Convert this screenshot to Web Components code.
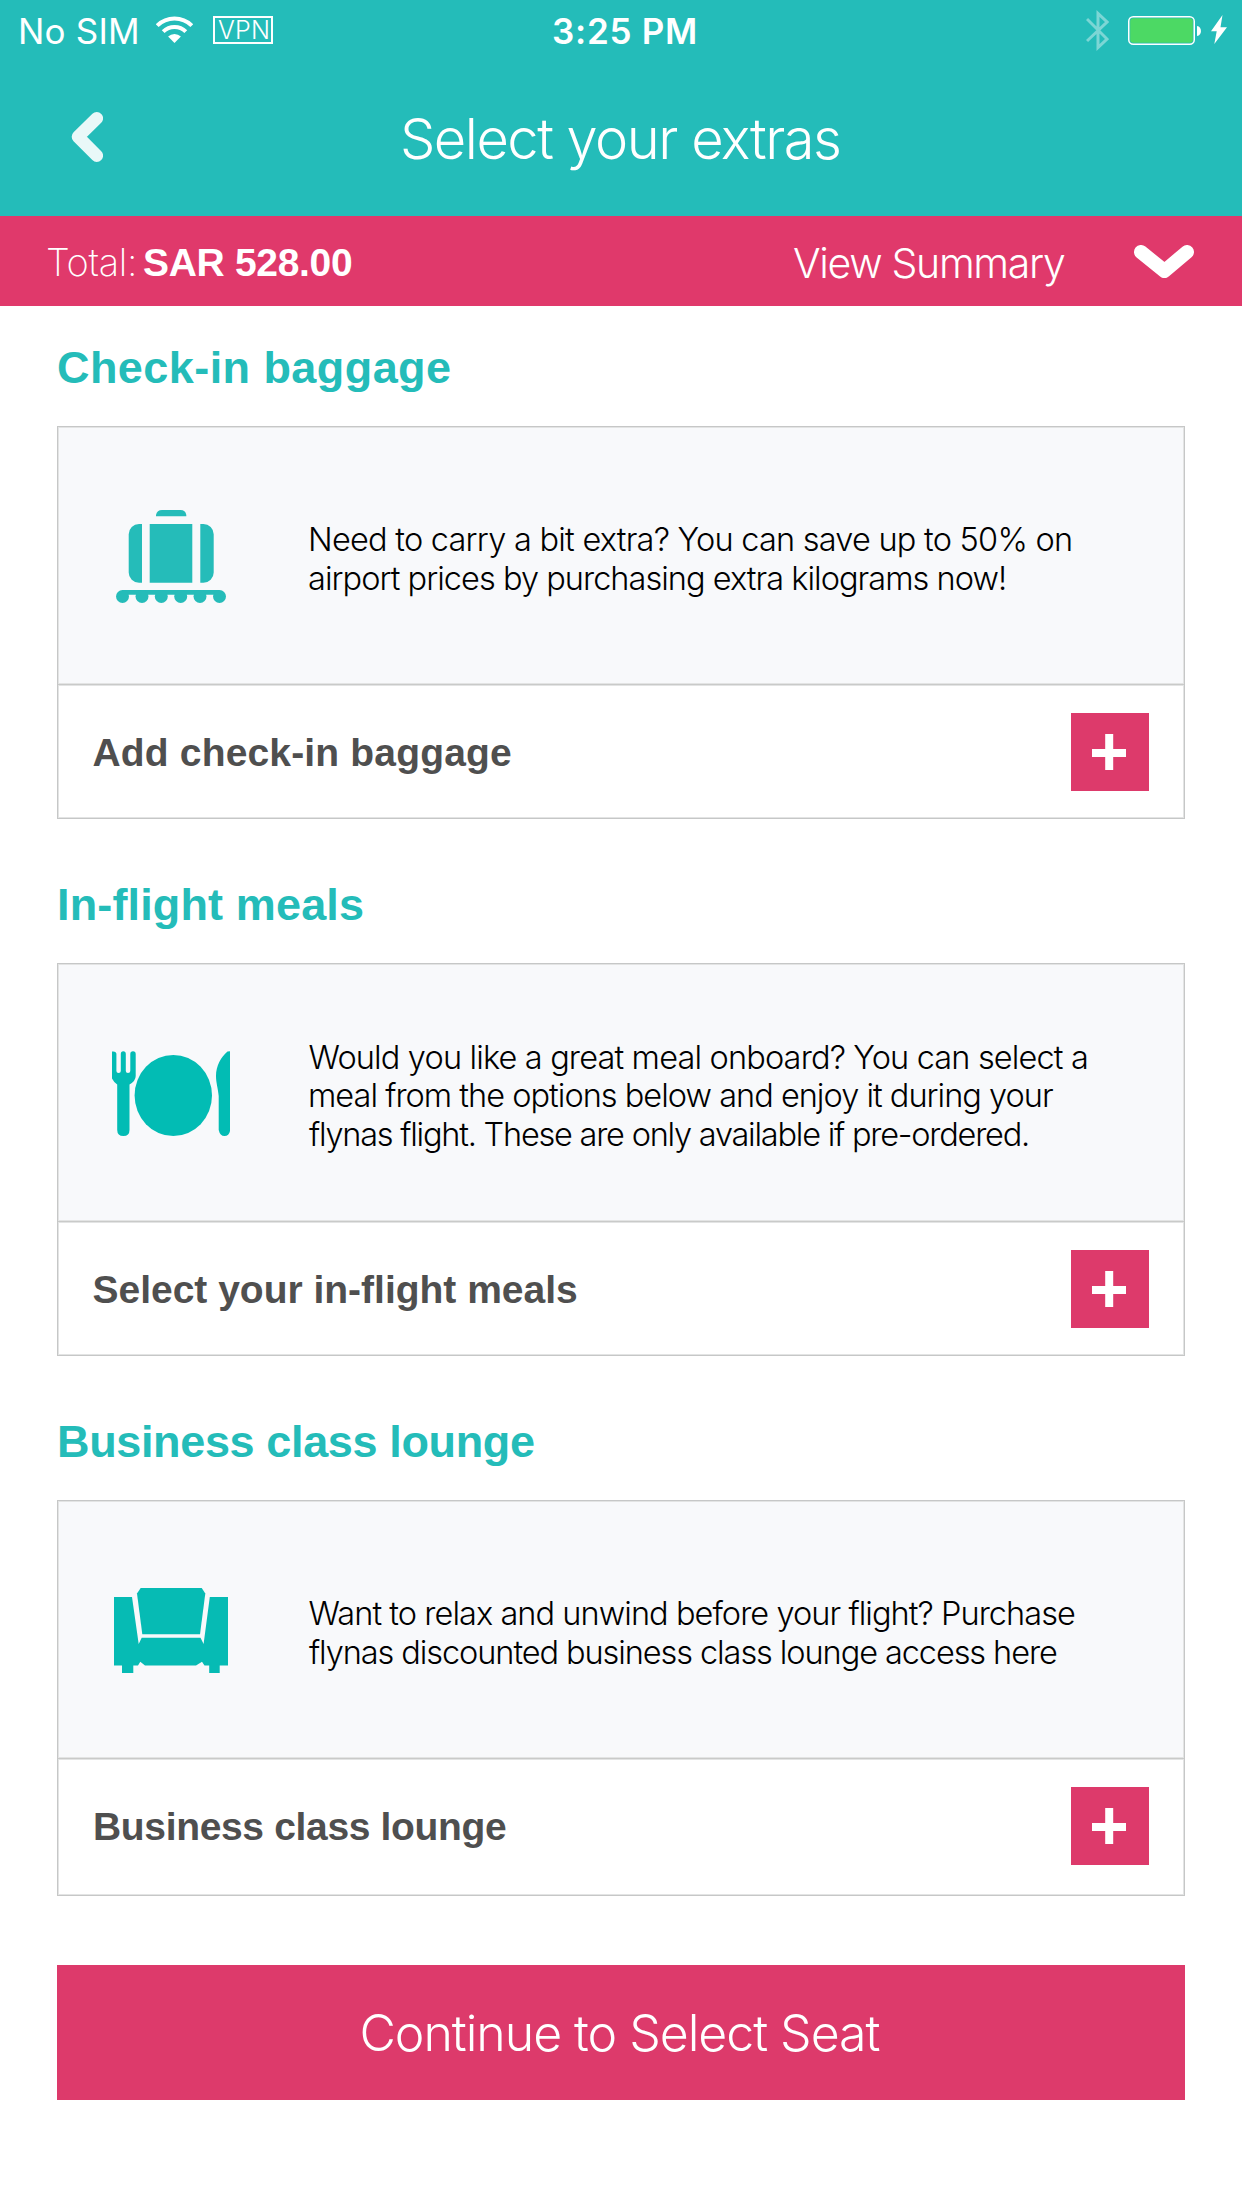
<!DOCTYPE html>
<html lang="en">
<head>
<meta charset="utf-8">
<title>Select your extras</title>
<style>
  body { margin: 0; background: #fff; font-family: Inter, "Liberation Sans", sans-serif; }
</style>
</head>
<body>
<extras-page></extras-page>

<script>
const define = (name, html, setup) => {
  const template = document.createElement('template');
  template.innerHTML = html;
  customElements.define(name, class extends HTMLElement {
    connectedCallback() {
      if (this.shadowRoot) return;
      this.attachShadow({ mode: 'open' }).append(template.content.cloneNode(true));
      if (setup) setup(this, this.shadowRoot);
    }
  });
};

/* One line of type whose tracking is set so that its ink spans the given width.
   "shift" fine-tunes where the first letter starts. */
const pen = document.createElement('canvas').getContext('2d');
define('fit-line', `
  <style>
    :host { display: block; white-space: nowrap; flex: none; }
    span { display: block; }
  </style>
  <span><slot></slot></span>`, (host, root) => {
  const text = host.textContent.trim();
  const target = Number(host.getAttribute('ink'));
  const shift = Number(host.getAttribute('shift') || 0);
  const style = getComputedStyle(host);
  pen.font = `${style.fontWeight} ${style.fontSize} ${style.fontFamily}`;
  const m = pen.measureText(text);
  const ink = m.actualBoundingBoxLeft + m.actualBoundingBoxRight;
  const span = root.querySelector('span');
  span.style.letterSpacing = ((target - shift - ink) / (text.length - 1)) + 'px';
  span.style.marginLeft = (m.actualBoundingBoxLeft + shift) + 'px';
  host.style.width = target + 'px';
});

define('status-bar', `
  <style>
    :host { display: grid; grid-template-columns: 1fr 142px 1fr; height: 63px; line-height: 63px;
            color: #fff; font-size: 35px; }
    .left, .right { display: flex; align-items: flex-start; }
    .left { padding-left: 21px; }
    .right { justify-content: flex-end; padding-right: 15px; }
    .clock { margin-left: 3px; font-weight: 600; }
    svg { display: block; flex: none; }
    .wifi { margin: 16px 20px 0 19px; }
    .vpn { box-sizing: border-box; width: 60px; height: 28px; margin-top: 16px; padding-left: 3px;
           border: 2px solid #fff; font-size: 25px; font-weight: 300; line-height: 24px; }
    .bt { margin-top: 10px; opacity: .4; }
    .battery { margin: 16px 10px 0 19px; }
    .bolt { margin-top: 15px; }
  </style>
  <div class="left">
    <fit-line ink="116">No SIM</fit-line>
    <svg class="wifi" width="37" height="27" viewBox="0 0 37 27">
      <g fill="none" stroke="#fff" stroke-width="4"><path d="M1.2 9.7A24.5 24.5 0 0 1 35.8 9.7"/><path d="M7.2 15.7A16 16 0 0 1 29.8 15.7"/></g>
      <path fill="#fff" d="M18.5 27L12.1 20.6A9 9 0 0 1 24.9 20.6Z"/>
    </svg>
    <div class="vpn"><fit-line ink="50">VPN</fit-line></div>
  </div>
  <fit-line class="clock" ink="142">3:25 PM</fit-line>
  <div class="right">
    <svg class="bt" width="23" height="41" viewBox="0 0 23 41"><path fill="none" stroke="#fff" stroke-width="3" d="M1 9L21 29L12 37.5V3.5L21 12L1 31"/></svg>
    <svg class="battery" width="73" height="29" viewBox="0 0 73 29">
      <rect x=".75" y=".75" width="65.5" height="27.5" rx="4.5" fill="none" stroke="#fff" stroke-width="1.5"/>
      <rect x="2.2" y="2.2" width="62.6" height="24.6" rx="3.2" fill="#4cd964"/>
      <path fill="#fff" d="M69 10C74.3 10.5 74.3 19.5 69 20Z"/>
    </svg>
    <svg class="bolt" width="16" height="29" viewBox="0 0 16 29"><path fill="#fff" d="M11.5 0L9.5 12.3H16L3.3 29L5.7 16.3H0Z"/></svg>
  </div>`);

define('nav-header', `
  <style>
    :host { display: grid; grid-template-columns: 403px 436px 1fr; height: 153px; line-height: 153px;
            color: #fff; font-size: 56px; font-weight: 300; }
    svg { display: block; margin: 49px 0 0 71px; }
  </style>
  <svg width="32" height="50" viewBox="0 0 32 50"><path d="M25.8 6.3L7 24.8L25.8 43.6" fill="none" stroke="#e9f8f8" stroke-width="12.6" stroke-linecap="round" stroke-linejoin="round"/></svg>
  <slot></slot>`);

define('total-bar', `
  <style>
    :host { display: flex; box-sizing: border-box; height: 90px; padding: 3px 48px 0; line-height: 87px;
            background: #e0396b; color: #fff; }
    .label { font-size: 38px; font-weight: 200; }
    .amount { margin-left: 10px; font: bold 39px/87px "Liberation Sans", Arial, sans-serif; }
    .view { margin: 1px 0 0 auto; font-size: 41px; font-weight: 300; }
    svg { display: block; margin: 26px 0 0 69px; }
  </style>
  <fit-line class="label" ink="86">Total:</fit-line>
  <fit-line class="amount" ink="208">SAR 528.00</fit-line>
  <fit-line class="view" ink="271">View Summary</fit-line>
  <svg width="60" height="33" viewBox="0 0 60 33"><path d="M7 7L30.500 26L53 7" fill="none" stroke="#fff" stroke-width="14" stroke-linecap="round" stroke-linejoin="round"/></svg>`);

define('section-title', `
  <style>
    :host { display: block; box-sizing: border-box; height: 144px; padding: 27px 0 0 2px;
            color: #24bcb9; font: bold 45px/117px "Liberation Sans", Arial, sans-serif; }
    :host([first]) { height: 120px; padding-top: 3px; }
  </style>
  <slot></slot>`);

define('add-tile', `
  <style>
    :host { display: block; width: 78px; height: 78px; background: #dd3a6b; }
    svg { display: block; }
  </style>
  <svg width="78" height="78" viewBox="0 0 78 78"><path fill="#fff" d="M34.2 21H42.2V36H55V44H42.2V57H34.2V44H21V36H34.2Z"/></svg>`);

define('extra-card', `
  <style>
    :host { display: flex; flex-direction: column; box-sizing: border-box; height: 393px;
            border: 1px solid #c6c7c7; box-shadow: inset 0 0 0 1px #e3e4e4; }
    :host([tall]) { height: 396px; }
    .info { display: flex; align-items: center; box-sizing: border-box; height: 258px; padding-left: 54px;
            background: #f8f9fb; border-bottom: 1px solid #c9cac9;
            box-shadow: inset 0 0 0 1px #e3e4e4; }
    .icon { display: flex; flex: none; width: 118px; margin-right: 79px; }
    .copy { padding-top: 8px; color: #000; font-size: 32.5px; font-weight: 300; line-height: 38.5px; }
    .row { display: flex; justify-content: space-between; padding: 27px 35px 0;
           color: #4f4f4f; font: bold 39px/80px "Liberation Sans", Arial, sans-serif;
           border-top: 1px solid #e3e4e4; }
  </style>
  <div class="info">
    <div class="icon"><slot name="icon"></slot></div>
    <div class="copy"><slot></slot></div>
  </div>
  <div class="row"><slot name="action"></slot><add-tile></add-tile></div>`);

define('icon-luggage', `
  <style>:host { display: block; margin-top: 2px; } svg { display: block; fill: #25bcb9; }</style>
  <svg width="118" height="93" viewBox="0 0 118 93">
    <path d="M44 6.3V5Q45 0 50 0H68.5Q73.5 0 74.3 5V6.3Z"/>
    <path d="M30 14V72.7H27A10.3 10.3 0 0 1 16.7 62.4V24.3A10.3 10.3 0 0 1 27 14Z"/>
    <path d="M37.7 14H80.3V72.7H37.7Z"/>
    <path d="M88.3 14H91.4A10.3 10.3 0 0 1 101.7 24.3V62.4A10.3 10.3 0 0 1 91.4 72.7H88.3Z"/>
    <path d="M10.3 80H107.5V84.8H10.3Z"/>
    <circle cx="10.5" cy="86.5" r="6.5"/><circle cx="30" cy="86.5" r="6.5"/><circle cx="49.3" cy="86.5" r="6.5"/>
    <circle cx="68.7" cy="86.5" r="6.5"/><circle cx="88" cy="86.5" r="6.5"/><circle cx="107.5" cy="86.5" r="6.5"/>
  </svg>`);

define('icon-meal', `
  <style>:host { display: block; margin-top: 2px; } svg { display: block; fill: #02bcb4; }</style>
  <svg width="118" height="85" viewBox="0 0 118 85">
    <path d="M0 .5Q4.4 0 4.4 3V20Q4.4 22 6.6 22T8.800 20V3Q8.800 .3 11.3 .3T13.800 3V20Q13.800 22 16 22T18.300 20V3Q18.300 .3 21 .3T23.700 3V25Q23.700 30 17.500 33.500V79Q17.500 85 11.400 85T5.200 79V33.500Q2 31.500 0 27.500Z"/>
    <ellipse cx="61.3" cy="44.5" rx="38.7" ry="40.5"/>
    <path d="M118 .3V80Q117 85 112.500 85T106.700 79V45C106 37 104 32 104 25C104 15 109 6 115.500 .5Z"/>
  </svg>`);

define('icon-lounge', `
  <style>:host { display: block; margin-top: 2px; } svg { display: block; fill: #06bbb4; }</style>
  <svg width="118" height="85" viewBox="0 0 118 85">
    <path d="M28.7 0H89.7L93.3 5.5L88 46.2H30.3L25 5.5Z"/>
    <path d="M2 9H20L26.7 56L29.7 49.7H88.5L91.6 56L97.8 9H116V77.5H107.7V85H97.2V77.5H92.5L90 73.8L84 77.5H33L28.3 73.8L26 77.5H21.3V85H10V77.5H2Z"/>
  </svg>`);

define('cta-button', `
  <style>
    :host { display: flex; justify-content: center; box-sizing: border-box; height: 135px; margin-top: 69px;
            padding-top: 1px; line-height: 135px;
            background: #dd3a6b; color: #fff; font-size: 50px; font-weight: 300; }
  </style>
  <fit-line ink="517">Continue to Select Seat</fit-line>`);

define('extras-page', `
  <style>
    :host { display: block; width: 1242px; height: 2208px; overflow: hidden; background: #fff; }
    header { background: #24bcb9; }
    main { display: flex; flex-direction: column; padding: 0 57px; }
  </style>
  <header>
    <status-bar></status-bar>
    <nav-header><fit-line ink="436">Select your extras</fit-line></nav-header>
  </header>
  <total-bar></total-bar>
  <main>
    <section-title first><fit-line ink="391" shift="-1">Check-in baggage</fit-line></section-title>
    <extra-card>
      <icon-luggage slot="icon"></icon-luggage>
      <fit-line ink="762" shift="2">Need to carry a bit extra? You can save up to 50% on</fit-line>
      <fit-line ink="696">airport prices by purchasing extra kilograms now!</fit-line>
      <fit-line slot="action" ink="418" shift="-.5">Add check-in baggage</fit-line>
    </extra-card>
    <section-title><fit-line ink="304" shift="1">In-flight meals</fit-line></section-title>
    <extra-card>
      <icon-meal slot="icon"></icon-meal>
      <fit-line ink="778" shift="-.5">Would you like a great meal onboard? You can select a</fit-line>
      <fit-line ink="744" shift="1">meal from the options below and enjoy it during your</fit-line>
      <fit-line ink="719">flynas flight. These are only available if pre-ordered.</fit-line>
      <fit-line slot="action" ink="484" shift=".5">Select your in-flight meals</fit-line>
    </extra-card>
    <section-title><fit-line ink="475" shift="1">Business class lounge</fit-line></section-title>
    <extra-card tall>
      <icon-lounge slot="icon"></icon-lounge>
      <fit-line ink="766" shift="-.5">Want to relax and unwind before your flight? Purchase</fit-line>
      <fit-line ink="748">flynas discounted business class lounge access here</fit-line>
      <fit-line slot="action" ink="413" shift="2">Business class lounge</fit-line>
    </extra-card>
    <cta-button></cta-button>
  </main>`);
</script>
</body>
</html>
